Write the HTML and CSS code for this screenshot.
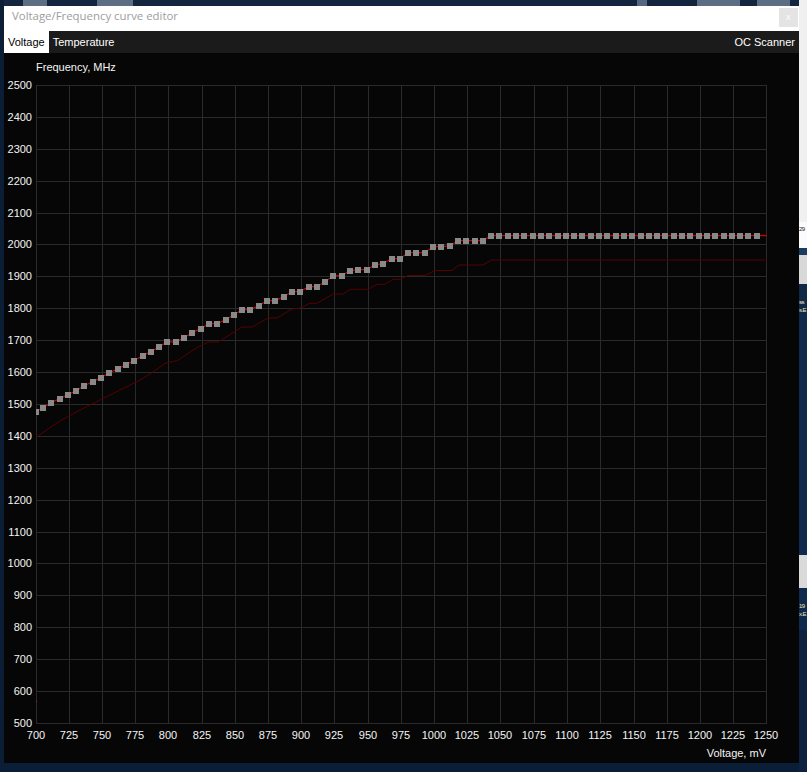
FILE: index.html
```html
<!DOCTYPE html>
<html>
<head>
<meta charset="utf-8">
<link rel="stylesheet" href="styles.css">
</head>
<body>
<div class="screen">
  <div class="edge-left"></div>
  <div class="center">
    <div class="top-strip"></div>
    <div class="window">
      <div class="titlebar">
        <span class="title">Voltage/Frequency curve editor</span>
        <span class="close">x</span>
      </div>
      <div class="tabbar">
        <span class="tab active">Voltage</span>
        <span class="tab">Temperature</span>
        <span class="tab-spacer"></span>
        <span class="tab">OC Scanner</span>
      </div>
      <div class="chart">
        <svg width="795" height="710" viewBox="0 0 795 710" xmlns="http://www.w3.org/2000/svg">
          <defs>
            <clipPath id="plotclip"><rect x="36" y="85" width="731" height="639"/></clipPath>
            <marker id="sq" markerWidth="6" markerHeight="6" refX="3" refY="3" markerUnits="userSpaceOnUse" overflow="visible">
              <rect width="6" height="6" fill="#898989" shape-rendering="crispEdges"/>
            </marker>
          </defs>
          <g transform="translate(-4 -53)">
            <path class="grid" d="M36.5 85V724M69.5 85V724M102.5 85V724M135.5 85V724M168.5 85V724M202.5 85V724M235.5 85V724M268.5 85V724M301.5 85V724M334.5 85V724M368.5 85V724M401.5 85V724M434.5 85V724M467.5 85V724M500.5 85V724M534.5 85V724M567.5 85V724M600.5 85V724M634.5 85V724M667.5 85V724M700.5 85V724M733.5 85V724M766.5 85V724
            M36 85.5H767M36 117.5H767M36 149.5H767M36 181.5H767M36 213.5H767M36 244.5H767M36 276.5H767M36 308.5H767M36 340.5H767M36 372.5H767M36 404.5H767M36 436.5H767M36 468.5H767M36 500.5H767M36 532.5H767M36 563.5H767M36 595.5H767M36 627.5H767M36 659.5H767M36 691.5H767M36 723.5H767"/>

            <text class="axis-title" x="36" y="71">Frequency, MHz</text>
            <g class="ylabels">
              <text x="32" y="89">2500</text>
              <text x="32" y="121">2400</text>
              <text x="32" y="153">2300</text>
              <text x="32" y="185">2200</text>
              <text x="32" y="217">2100</text>
              <text x="32" y="248">2000</text>
              <text x="32" y="280">1900</text>
              <text x="32" y="312">1800</text>
              <text x="32" y="344">1700</text>
              <text x="32" y="376">1600</text>
              <text x="32" y="408">1500</text>
              <text x="32" y="440">1400</text>
              <text x="32" y="472">1300</text>
              <text x="32" y="504">1200</text>
              <text x="32" y="536">1100</text>
              <text x="32" y="567">1000</text>
              <text x="32" y="599">900</text>
              <text x="32" y="631">800</text>
              <text x="32" y="663">700</text>
              <text x="32" y="695">600</text>
              <text x="32" y="727">500</text>
            </g>
            <g class="xlabels">
              <text x="36" y="739">700</text>
              <text x="69" y="739">725</text>
              <text x="102" y="739">750</text>
              <text x="135" y="739">775</text>
              <text x="168" y="739">800</text>
              <text x="202" y="739">825</text>
              <text x="235" y="739">850</text>
              <text x="268" y="739">875</text>
              <text x="301" y="739">900</text>
              <text x="334" y="739">925</text>
              <text x="368" y="739">950</text>
              <text x="401" y="739">975</text>
              <text x="434" y="739">1000</text>
              <text x="467" y="739">1025</text>
              <text x="500" y="739">1050</text>
              <text x="534" y="739">1075</text>
              <text x="567" y="739">1100</text>
              <text x="600" y="739">1125</text>
              <text x="634" y="739">1150</text>
              <text x="667" y="739">1175</text>
              <text x="700" y="739">1200</text>
              <text x="733" y="739">1225</text>
              <text x="766" y="739">1250</text>
            </g>
            <text class="axis-title end" x="766" y="757">Voltage, mV</text>

            <g clip-path="url(#plotclip)">
              <polyline class="base-curve" points="36,437.3 48,429 60,421 70,415.5 80,410 90,405 100,400 110,395 120,390 130,385 140,380 150,374 160,367 165,363.3 177,360.7 188,353.5 198,347 208,342 218,342 230,334.5 242,327 252,327 268,318 277,318 292,309 300,308 310,303.3 317,303.3 333,294 343,294 350,289.3 368,289.3 377,284.3 385,284.3 393,279.3 400,279.3 408,275.5 425,275.5 435,270.5 452,270.5 459,265 483,265 491.5,260 767,260"/>
              <polyline class="oc-curve" points="756.7,235.7 767,235.7"/>
              <polyline class="oc-curve pts" points="36,411.7 42.9,407.7 51.2,402.7 59.5,398.7 67.8,394.7 76.1,390.7 84.4,385.7 92.7,381.7 101,377.7 109.3,372.7 117.6,369 125.9,364.7 134.2,360.7 142.5,355.7 150.8,351.7 159.1,346.7 167.4,341.7 175.7,342.2 184,337.7 192.3,332.7 200.6,328.7 208.9,323.7 217.2,323.7 225.5,319.7 233.8,314.7 242.1,309.7 250.4,309.7 258.7,305.7 267,300.7 275.3,300.7 283.6,296.7 291.9,291.7 300.2,291.7 308.5,286.7 316.8,286.7 325.1,281.7 333.4,275.7 341.7,275.7 350,270.7 358.3,269.7 366.6,269.7 374.9,264.7 383.2,263.7 391.5,258.7 399.8,258.7 408.1,252.7 416.4,252.7 424.7,252.7 433,246.7 441.3,246.7 449.6,245.7 457.9,240.7 466.2,240.7 474.5,240.7 482.8,240.7 491.1,235.7 499.4,235.7 507.7,235.7 516,235.7 524.3,235.7 532.6,235.7 540.9,235.7 549.2,235.7 557.5,235.7 565.8,235.7 574.1,235.7 582.4,235.7 590.7,235.7 599,235.7 607.3,235.7 615.6,235.7 623.9,235.7 632.2,235.7 640.5,235.7 648.8,235.7 657.1,235.7 665.4,235.7 673.7,235.7 682,235.7 690.3,235.7 698.6,235.7 706.9,235.7 715.2,235.7 723.5,235.7 731.8,235.7 740.1,235.7 748.4,235.7 756.7,235.7"/>
              <rect x="36" y="701" width="1" height="1" fill="#ff0000"/>
            </g>
          </g>
        </svg>
      </div>
    </div>
    <div class="bottom-strip"></div>
  </div>
  <div class="edge-right">
    <div class="rs rs-a"></div>
    <div class="rs rs-b">29</div>
    <div class="rs rs-c"></div>
    <div class="rs rs-d"></div>
    <div class="rs rs-e">ss<br>s.E</div>
    <div class="rs rs-f"></div>
    <div class="rs rs-g"></div>
    <div class="rs rs-h"></div>
    <div class="rs rs-i">19<br>x.E</div>
    <div class="rs rs-j"></div>
  </div>
</div>
</body>
</html>
```

FILE: styles.css
```css
* {
  box-sizing: border-box;
  margin: 0;
  padding: 0;
}

html, body {
  width: 807px;
  height: 772px;
  overflow: hidden;
  background: #0b1b33;
  font-family: "Liberation Sans", Arial, sans-serif;
}

.screen {
  display: flex;
  width: 807px;
  height: 772px;
}

.edge-left {
  width: 4px;
  background: #0c1d36;
}

.center {
  width: 795px;
  display: flex;
  flex-direction: column;
}

.top-strip {
  height: 6px;
  background: linear-gradient(to right,
    #14263f 0, #14263f 19px,
    #5d6d84 19px, #5d6d84 43px,
    #14263f 43px, #14263f 93px,
    #5d6d84 93px, #5d6d84 129px,
    #14263f 129px, #14263f 633px,
    #56677f 633px, #56677f 643px,
    #14263f 643px, #14263f 693px,
    #5d6d84 693px, #5d6d84 736px,
    #14263f 736px, #14263f 753px,
    #5d6d84 753px, #5d6d84 786px,
    #14263f 786px);
}

.window {
  height: 757px;
  display: flex;
  flex-direction: column;
  background: #060606;
}

.titlebar {
  height: 25px;
  background: #ffffff;
  display: flex;
  align-items: flex-start;
  justify-content: space-between;
  padding: 0 1px 0 8px;
}

.title {
  font-family: "Open Sans", "Noto Sans", sans-serif;
  font-size: 11.4px;
  line-height: 20px;
  color: #9d9d9d;
}

.close {
  margin-top: 2px;
  width: 19px;
  height: 19px;
  background: #e4e4e4;
  color: #fbfbfb;
  font-family: "DejaVu Sans", sans-serif;
  font-size: 9px;
  line-height: 19px;
  text-align: center;
}

.tabbar {
  height: 22px;
  background: #1b1b1b;
  display: flex;
  align-items: stretch;
  font-size: 11px;
  color: #ffffff;
}

.tab {
  display: flex;
  align-items: center;
  padding: 0 4px;
}

.tab.active {
  background: #ffffff;
  color: #000000;
}

.tab-spacer {
  flex: 1;
}

.chart {
  flex: 1;
  background: #060606;
}

.chart svg {
  display: block;
}

.grid {
  fill: none;
  stroke: #2a2a2a;
  stroke-width: 1;
  shape-rendering: crispEdges;
}

.ylabels text,
.xlabels text,
.axis-title {
  font-family: "Liberation Sans", Arial, sans-serif;
  font-size: 11px;
  fill: #f4f4f4;
}

.ylabels text {
  text-anchor: end;
}

.xlabels text {
  text-anchor: middle;
}

.axis-title.end {
  text-anchor: end;
}

.base-curve {
  fill: none;
  stroke: #560000;
  stroke-width: 1;
}

.oc-curve {
  fill: none;
  stroke: #ff0000;
  stroke-width: 1;
}

.pts {
  marker-start: url(#sq);
  marker-mid: url(#sq);
  marker-end: url(#sq);
}

.bottom-strip {
  height: 9px;
  background: #0b1e38;
}

.edge-right {
  width: 8px;
  display: flex;
  flex-direction: column;
  overflow: hidden;
}

.rs {
  font-family: "Liberation Sans", Arial, sans-serif;
  font-size: 6px;
  line-height: 8px;
  letter-spacing: -0.6px;
  overflow: hidden;
  white-space: nowrap;
}

.rs-a { height: 222px; background: #f0f0f0; }
.rs-b { height: 26px; background: #fbfbfb; color: #222222; padding-top: 3px; }
.rs-c { height: 7px; background: #1d3b5e; }
.rs-d { height: 29px; background: #d8d8d8; }
.rs-e { height: 30px; background: #0f2846; color: #f0ead0; padding-top: 14px; }
.rs-f { height: 241px; background: #0f2a4d; }
.rs-g { height: 33px; background: #dadada; }
.rs-h { height: 12px; background: #0f2a4d; }
.rs-i { height: 30px; background: #0f2a4d; color: #f0e6b0; padding-top: 2px; }
.rs-j { flex: 1; background: #0c2240; }
```
